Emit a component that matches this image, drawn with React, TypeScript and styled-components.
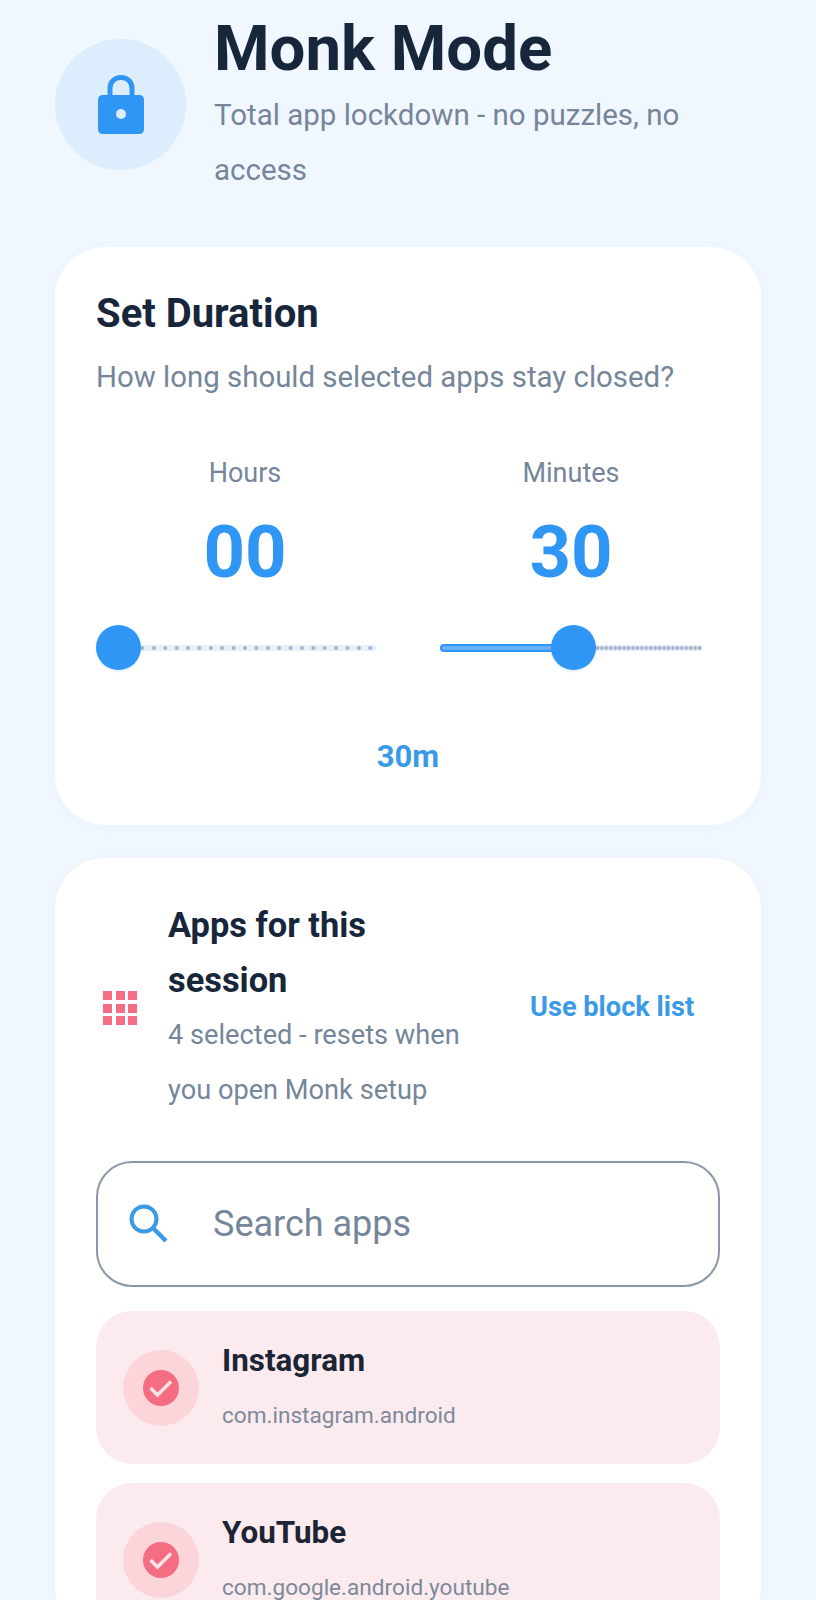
import styled, { createGlobalStyle } from "styled-components";

const GlobalStyle = createGlobalStyle`
  html, body {
    margin: 0;
    height: 1600px;
    overflow: hidden;
    background: #f1f7ff;
    font-family: "Roboto", "Liberation Sans", sans-serif;
  }
`;

const LockIcon = () => (
  <svg width="46" height="59" viewBox="0 0 46 59" fill="none">
    <path d="M12 24V13.500C12 7 16.500 2.500 23 2.500S34 7 34 13.500V24" stroke="#3096f5" strokeWidth="5" />
    <path
      d="M4.500 20h37C44 20 46 22 46 24.500V54.500C46 57 44 59 41.500 59h-37C2 59 0 57 0 54.500V24.500C0 22 2 20 4.500 20Z"
      fill="#3096f5"
    />
    <circle cx="23" cy="39" r="5" fill="#dcedfd" />
  </svg>
);

const SearchIcon = () => (
  <svg width="42" height="42" viewBox="0 0 42 42" fill="none">
    <circle cx="17" cy="16" r="12.500" stroke="#3b9ae6" strokeWidth="4" />
    <path d="M26.500 25.500L39 38" stroke="#3b9ae6" strokeWidth="4.500" />
  </svg>
);

const CheckBadge = () => (
  <svg width="36" height="36" viewBox="0 0 36 36">
    <circle cx="18" cy="18" r="18" fill="#f56d83" />
    <path d="M7.500 18L14.500 25L28 11.500" fill="none" stroke="#fbe4e7" strokeWidth="3.500" />
  </svg>
);

type SliderProps = { value: number; max: number };

const DurationSlider = ({ value, max }: SliderProps) => {
  const pct = value / max;
  const activeWidth = `${pct * 100}%`;
  const thumbLeft = `calc(4px + (100% - 8px) * ${pct})`;
  const tickSize = 262 / max;
  return (
    <SliderBox>
      <Track>
        <InactiveTrack style={{ backgroundSize: `${tickSize}px 100%` }} />
        {value > 0 && <ActiveTrack style={{ width: activeWidth }} />}
        <Thumb style={{ left: thumbLeft }} />
      </Track>
    </SliderBox>
  );
};

const apps = [
  { name: "Instagram", pkg: "com.instagram.android" },
  { name: "YouTube", pkg: "com.google.android.youtube" },
];

export default function App() {
  return (
    <>
      <GlobalStyle />
      <Page>
        <Header>
          <LockCircle>
            <LockIcon />
          </LockCircle>
          <HeaderText>
            <PageTitle>Monk Mode</PageTitle>
            <PageSub>Total app lockdown - no puzzles, no access</PageSub>
          </HeaderText>
        </Header>

        <DurationCard>
          <CardTitle>Set Duration</CardTitle>
          <CardSub>How long should selected apps stay closed?</CardSub>
          <PickerRow>
            <Picker>
              <PickerLabel>Hours</PickerLabel>
              <PickerValue>00</PickerValue>
              <DurationSlider value={0} max={23} />
            </Picker>
            <Picker>
              <PickerLabel>Minutes</PickerLabel>
              <PickerValue>30</PickerValue>
              <DurationSlider value={30} max={59} />
            </Picker>
          </PickerRow>
          <Total>30m</Total>
        </DurationCard>

        <AppsCard>
          <AppsHead>
            <GridIcon>
              {Array.from({ length: 9 }).map((_, i) => (
                <GridDot key={i} />
              ))}
            </GridIcon>
            <AppsHeadText>
              <AppsTitle>Apps for this session</AppsTitle>
              <AppsSub>4 selected - resets when you open Monk setup</AppsSub>
            </AppsHeadText>
            <BlockListButton>Use block list</BlockListButton>
          </AppsHead>

          <SearchBox>
            <SearchIcon />
            <SearchText>Search apps</SearchText>
          </SearchBox>

          <AppList>
            {apps.map((app) => (
              <AppRow key={app.pkg}>
                <CheckHalo>
                  <CheckBadge />
                </CheckHalo>
                <AppText>
                  <AppName>{app.name}</AppName>
                  <AppPackage>{app.pkg}</AppPackage>
                </AppText>
              </AppRow>
            ))}
          </AppList>
        </AppsCard>
      </Page>
    </>
  );
}

const Page = styled.div`
  height: 1600px;
  overflow: hidden;
  box-sizing: border-box;
  padding: 10px 55px 0;
  background: #f1f7ff;
`;

const Header = styled.header`
  display: flex;
  align-items: center;
  gap: 28px;
  margin-bottom: 49px;
`;

const LockCircle = styled.div`
  width: 131px;
  height: 131px;
  flex-shrink: 0;
  border-radius: 50%;
  background: #dcedfd;
  display: flex;
  align-items: center;
  justify-content: center;
`;

const HeaderText = styled.div`
  flex: 1;
  min-width: 0;
`;

const PageTitle = styled.h1`
  margin: 0;
  font-size: 63.500px;
  line-height: 78px;
  font-weight: 700;
  color: #17263a;
`;

const PageSub = styled.p`
  margin: 0;
  max-width: 480px;
  font-size: 29.500px;
  line-height: 55px;
  color: #75869a;
`;

const Card = styled.section`
  background: #ffffff;
  border-radius: 50px;
  box-sizing: border-box;
  padding: 41px;
  box-shadow: 0 2px 12px rgba(120, 160, 210, 0.05);
`;

const DurationCard = styled(Card)`
  height: 578px;
  padding-top: 44px;
  margin-bottom: 33px;
`;

const CardTitle = styled.h2`
  margin: 0;
  font-size: 40px;
  line-height: 46px;
  font-weight: 700;
  color: #17263a;
`;

const CardSub = styled.p`
  margin: 23px 0 0;
  font-size: 29.400px;
  line-height: 34px;
  color: #75869a;
`;

const PickerRow = styled.div`
  display: flex;
  gap: 28px;
  margin-top: 63px;
`;

const Picker = styled.div`
  flex: 1;
  min-width: 0;
  text-align: center;
`;

const PickerLabel = styled.div`
  font-size: 27px;
  line-height: 32px;
  color: #75869a;
`;

const PickerValue = styled.div`
  margin-top: 25px;
  font-size: 72.500px;
  line-height: 78px;
  font-weight: 700;
  color: #3096f5;
`;

const SliderBox = styled.div`
  padding: 0 18px;
  margin-top: 33px;
`;

const Track = styled.div`
  position: relative;
  height: 46px;
`;

const InactiveTrack = styled.div`
  position: absolute;
  left: 0;
  right: 0;
  top: 20px;
  height: 6px;
  border-radius: 3px;
  background-color: #e5f0fc;
  background-image: radial-gradient(circle at center, #a7b5c8 0, #a7b5c8 1.600px, transparent 2.200px);
  background-repeat: repeat-x;
`;

const ActiveTrack = styled.div`
  position: absolute;
  left: 0;
  top: 19px;
  height: 8px;
  box-sizing: border-box;
  border-radius: 4px;
  background: #66b3fa;
  border: 2px solid #3096f5;
`;

const Thumb = styled.div`
  position: absolute;
  top: 0;
  width: 45px;
  height: 45px;
  margin-left: -22.500px;
  border-radius: 50%;
  background: #3096f5;
  box-shadow: 0 1px 3px rgba(48, 150, 245, 0.2);
`;

const Total = styled.div`
  margin-top: 68px;
  text-align: center;
  font-size: 31px;
  line-height: 36px;
  font-weight: 700;
  color: #3b9ae6;
`;

const AppsCard = styled(Card)`
  padding-top: 40px;
  padding-bottom: 0;
`;

const AppsHead = styled.div`
  display: flex;
  align-items: center;
`;

const GridIcon = styled.div`
  width: 34px;
  flex-shrink: 0;
  display: grid;
  grid-template-columns: repeat(3, 9px);
  gap: 3.500px;
  margin: 0 31px 0 7px;
`;

const GridDot = styled.span`
  height: 9px;
  background: #f56d83;
`;

const AppsHeadText = styled.div`
  width: 318px;
  flex-shrink: 0;
`;

const AppsTitle = styled.h3`
  margin: 0;
  font-size: 34.400px;
  line-height: 55px;
  font-weight: 700;
  color: #17263a;
`;

const AppsSub = styled.p`
  margin: 0;
  font-size: 27.200px;
  line-height: 55px;
  color: #75869a;
`;

const BlockListButton = styled.span`
  margin-left: 44px;
  margin-bottom: 2px;
  font-size: 27.200px;
  font-weight: 700;
  white-space: nowrap;
  color: #3b9ae6;
`;

const SearchBox = styled.div`
  margin-top: 43px;
  height: 126px;
  box-sizing: border-box;
  border: 2px solid #8a97a8;
  border-radius: 36px;
  display: flex;
  align-items: center;
  gap: 44px;
  padding: 0 0 0 29px;
`;

const SearchText = styled.span`
  font-size: 36px;
  color: #75869a;
`;

const AppList = styled.div`
  display: flex;
  flex-direction: column;
  gap: 19px;
  margin-top: 24px;
`;

const AppRow = styled.div`
  height: 153px;
  flex-shrink: 0;
  box-sizing: border-box;
  border-radius: 36px;
  background: #fcebee;
  display: flex;
  align-items: center;
  gap: 23px;
  padding-left: 27px;
`;

const CheckHalo = styled.div`
  width: 76px;
  height: 76px;
  border-radius: 50%;
  background: #fbd5da;
  display: flex;
  align-items: center;
  justify-content: center;
`;

const AppText = styled.div`
  padding-bottom: 4px;
`;

const AppName = styled.div`
  font-size: 31.400px;
  line-height: 40px;
  font-weight: 700;
  color: #1c2536;
`;

const AppPackage = styled.div`
  margin-top: 21px;
  font-size: 22.600px;
  line-height: 28px;
  color: #7d899b;
`;
